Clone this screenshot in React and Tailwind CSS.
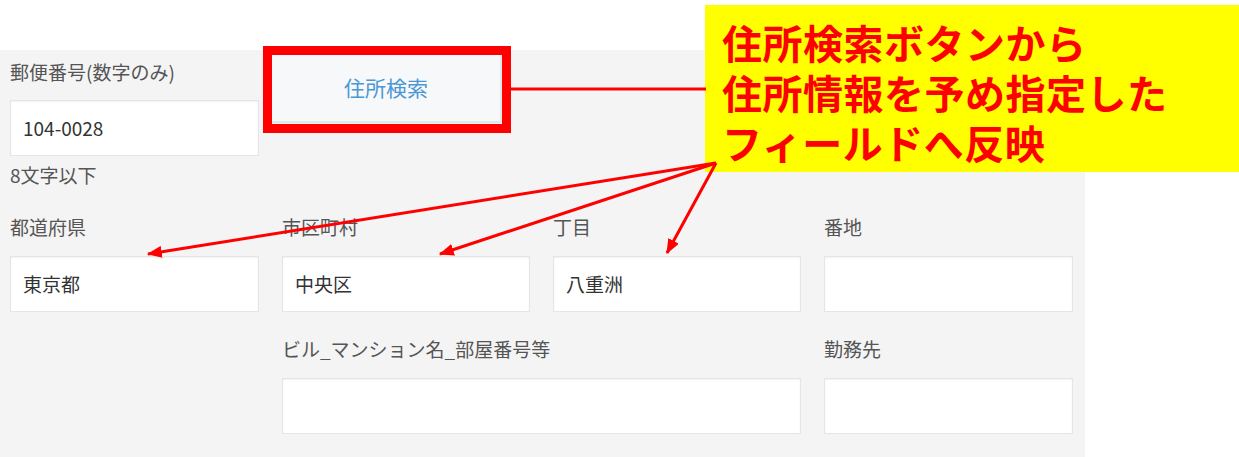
import React from "react";

const Field = ({ label, value, className = "" }) => {
  return (
    <div className={className}>
      <div className="text-[19px] leading-[22px] text-[#555] mb-[18px]">{label}</div>
      <div className="h-[56px] bg-white border border-[#e2e6e6] shadow-[inset_0_1px_2px_rgba(0,0,0,0.06)] px-[12px] flex items-center text-[19px] text-[#333]">
        {value}
      </div>
    </div>
  );
};

const Callout = () => {
  return (
    <>
      <div className="absolute left-[263px] top-[46px] w-[248px] h-[87px] border-[9px] border-[#ff0000]" />
      <div className="absolute left-[705px] top-[5px] w-[534px] h-[167px] bg-[#ffff00] pl-[17px] pt-[12px] text-[#ff0000] text-[40px] leading-[50px] font-bold tracking-[0.5px]">
        <div>住所検索ボタンから</div>
        <div>住所情報を予め指定した</div>
        <div>フィールドへ反映</div>
      </div>
      <svg className="absolute left-0 top-0 pointer-events-none" width="1239" height="457">
        <defs>
          <marker id="ah" markerWidth="5" markerHeight="4" refX="4.6" refY="2" orient="auto" markerUnits="strokeWidth">
            <path d="M0,0 L5,2 L0,4 z" fill="#ff0000" />
          </marker>
        </defs>
        <line x1="511" y1="89" x2="706" y2="89" stroke="#ff0000" strokeWidth="3" />
        <line x1="716" y1="163" x2="148" y2="254" stroke="#ff0000" strokeWidth="3" markerEnd="url(#ah)" />
        <line x1="716" y1="163" x2="440" y2="254" stroke="#ff0000" strokeWidth="3" markerEnd="url(#ah)" />
        <line x1="716" y1="163" x2="667" y2="253" stroke="#ff0000" strokeWidth="3" markerEnd="url(#ah)" />
      </svg>
    </>
  );
};

const App = () => {
  return (
    <div
      className="relative w-[1239px] h-[457px] bg-white overflow-hidden"
      style={{ fontFamily: '"Noto Sans CJK JP", "Noto Sans", sans-serif' }}
    >
      <div className="mt-[50px] w-[1085px] h-[407px] bg-[#f4f4f4] pl-[10px] pt-[11px]">
        <div className="flex items-start">
          <div className="w-[249px]">
            <div className="text-[19px] leading-[22px] text-[#555] mb-[17px]">郵便番号(数字のみ)</div>
            <div className="h-[56px] bg-white border border-[#e2e6e6] shadow-[inset_0_1px_2px_rgba(0,0,0,0.06)] px-[12px] flex items-center text-[19px] text-[#333]">
              104-0028
            </div>
            <div className="mt-[8px] text-[19px] leading-[22px] text-[#555]">8文字以下</div>
          </div>
          <button className="ml-[13px] -mt-[6px] w-[230px] h-[68px] bg-[#f7f8fa] border-r-2 border-b-2 border-[#e4e7e7] text-[21px] text-[#4a97d4]">
            住所検索
          </button>
        </div>

        <div className="mt-[30px] grid grid-cols-[249px_248px_248px_249px] gap-x-[23px] gap-y-[26px]">
          <Field label="都道府県" value="東京都" />
          <Field label="市区町村" value="中央区" />
          <Field label="丁目" value="八重洲" />
          <Field label="番地" value="" />
          <div />
          <Field label="ビル_マンション名_部屋番号等" value="" className="col-span-2" />
          <Field label="勤務先" value="" />
        </div>
      </div>
      <Callout />
    </div>
  );
};

export default App;
